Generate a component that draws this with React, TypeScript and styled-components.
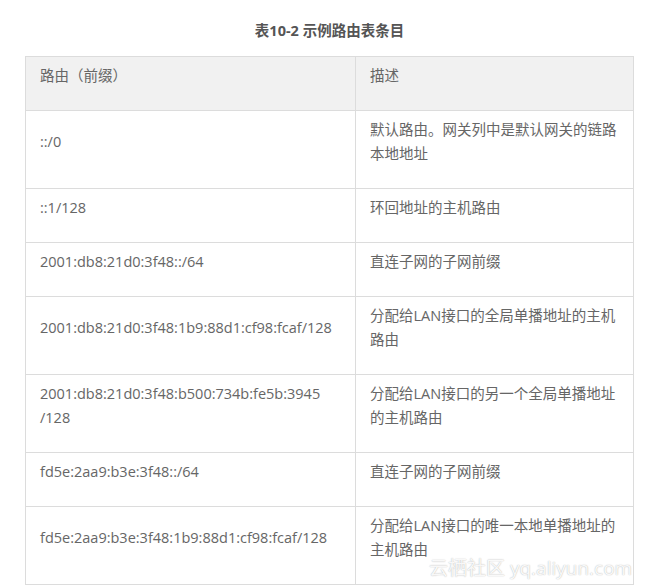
import React from 'react'
import styled, { createGlobalStyle } from 'styled-components'

const GlobalStyle = createGlobalStyle`
  body {
    margin: 0;
    background: #fff;
    font-family: 'Open Sans', 'Noto Sans CJK SC', sans-serif;
  }
`

const Page = styled.div`
  position: relative;
  width: 657px;
  height: 585px;
  padding-left: 25px;
  box-sizing: border-box;
  overflow: hidden;
`

const Caption = styled.div`
  width: 609px;
  padding: 21px 0 15px;
  text-align: center;
  font-size: 14.5px;
  line-height: 20px;
  font-weight: 700;
  color: #555;
`

const Table = styled.table`
  width: 609px;
  table-layout: fixed;
  border-collapse: collapse;
  font-size: 14.5px;
  line-height: 24px;
  color: #666;
`

const Cell = styled.td<{ $head?: boolean }>`
  border: 1px solid #dcdcdc;
  padding: 7px 14px 22px;
  vertical-align: middle;
  text-align: left;
  font-weight: 400;
  background: ${({ $head }) => ($head ? '#f1f1f1' : '#fff')};
`

const Watermark = styled.div`
  position: absolute;
  left: 429px;
  top: 557px;
  font-size: 19px;
  line-height: 22px;
  color: rgba(255, 255, 255, 0.92);
  text-shadow: 0 0 1px rgba(0, 0, 0, 0.25), 0 0 2px rgba(0, 0, 0, 0.1);
  white-space: nowrap;
  pointer-events: none;
`

interface RouteRow {
  prefix: React.ReactNode
  desc: string
}

const rows: RouteRow[] = [
  { prefix: '::/0', desc: '默认路由。网关列中是默认网关的链路本地地址' },
  { prefix: '::1/128', desc: '环回地址的主机路由' },
  { prefix: '2001:db8:21d0:3f48::/64', desc: '直连子网的子网前缀' },
  { prefix: '2001:db8:21d0:3f48:1b9:88d1:cf98:fcaf/128', desc: '分配给LAN接口的全局单播地址的主机路由' },
  {
    prefix: (
      <>
        2001:db8:21d0:3f48:b500:734b:fe5b:3945<wbr />/128
      </>
    ),
    desc: '分配给LAN接口的另一个全局单播地址的主机路由',
  },
  { prefix: 'fd5e:2aa9:b3e:3f48::/64', desc: '直连子网的子网前缀' },
  { prefix: 'fd5e:2aa9:b3e:3f48:1b9:88d1:cf98:fcaf/128', desc: '分配给LAN接口的唯一本地单播地址的主机路由' },
]

export default function App() {
  return (
    <>
      <GlobalStyle />
      <Page>
        <Caption>表10-2 示例路由表条目</Caption>
        <Table>
          <colgroup>
            <col style={{ width: 330 }} />
            <col />
          </colgroup>
          <thead>
            <tr>
              <Cell as="th" $head>
                路由（前缀）
              </Cell>
              <Cell as="th" $head>
                描述
              </Cell>
            </tr>
          </thead>
          <tbody>
            {rows.map((row, i) => (
              <tr key={i}>
                <Cell>{row.prefix}</Cell>
                <Cell>{row.desc}</Cell>
              </tr>
            ))}
          </tbody>
        </Table>
        <Watermark>云栖社区 yq.aliyun.com</Watermark>
      </Page>
    </>
  )
}
